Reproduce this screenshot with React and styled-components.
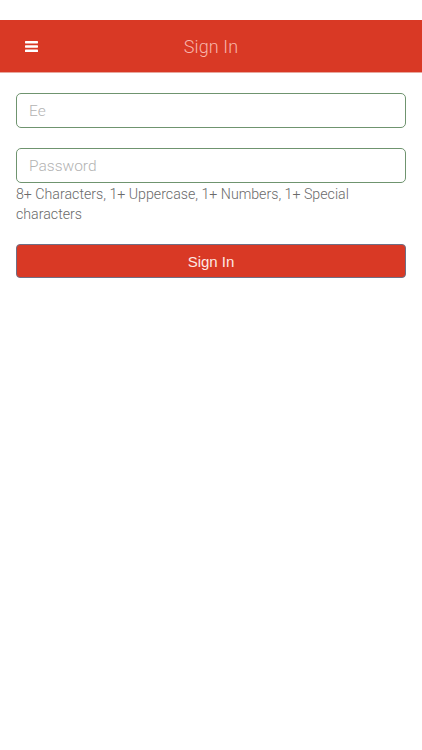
import React from "react";
import styled, { createGlobalStyle } from "styled-components";

const Global = createGlobalStyle`
  html, body { margin: 0; padding: 0; background: #ffffff; }
  body { font-family: "Liberation Sans", Arial, sans-serif; }
  * { box-sizing: border-box; }
`;

const Page = styled.div`
  width: 422px;
  min-height: 750px;
  background: #fff;
  padding-top: 20px;
`;

const Header = styled.header`
  height: 53px;
  background: #d93925;
  display: grid;
  grid-template-columns: 60px 1fr 60px;
  align-items: center;
  border-bottom: 1px solid #e8a79d;
`;

const MenuButton = styled.button`
  background: none;
  border: 0;
  padding: 0 0 0 25px;
  display: flex;
  align-items: center;
  height: 100%;
  cursor: pointer;
`;

const Title = styled.h1`
  margin: 0;
  text-align: center;
  font-family: "Roboto", "Liberation Sans", sans-serif;
  font-weight: 300;
  font-size: 18px;
  color: #f8b6ab;
  letter-spacing: 0.1px;
`;

const Form = styled.form`
  padding: 20px 16px 0;
  display: flex;
  flex-direction: column;
`;

const Input = styled.input`
  width: 100%;
  height: 35px;
  border: 1.5px solid #6f946f;
  border-radius: 5px;
  padding: 0 12px;
  font-family: "Roboto", "Liberation Sans", sans-serif;
  font-weight: 300;
  font-size: 15.5px;
  color: #333;
  outline: none;
  margin-top: ${(p) => p.$mt || 0}px;
  &::placeholder { color: #b3b3b3; }
`;

const Hint = styled.p`
  margin: 1px 0 0;
  font-size: 14.2px;
  line-height: 20px;
  color: #6a6a6a;
  font-family: "Roboto", "Liberation Sans", sans-serif;
  font-weight: 300;
`;

const SubmitButton = styled.button`
  margin-top: 20px;
  height: 34px;
  width: 100%;
  background: #d93925;
  border: 1.5px solid #6f6f85;
  border-radius: 4px;
  color: #fde8e4;
  font-family: "Liberation Sans", Arial, sans-serif;
  font-size: 15px;
  cursor: pointer;
`;

function Bars() {
  return (
    <svg width="13" height="11" viewBox="0 0 13 11">
      <rect x="0" y="0" width="13" height="2.4" rx="0.6" fill="#fff" />
      <rect x="0" y="4.3" width="13" height="2.4" rx="0.6" fill="#fff" />
      <rect x="0" y="8.6" width="13" height="2.4" rx="0.6" fill="#fff" />
    </svg>
  );
}

export default function App() {
  return (
    <Page>
      <Global />
      <Header>
        <MenuButton aria-label="menu">
          <Bars />
        </MenuButton>
        <Title>Sign In</Title>
        <div />
      </Header>
      <Form onSubmit={(e) => e.preventDefault()}>
        <Input placeholder="Ee" />
        <Input $mt={20} type="password" placeholder="Password" />
        <Hint>8+ Characters, 1+ Uppercase, 1+ Numbers, 1+ Special characters</Hint>
        <SubmitButton type="submit">Sign In</SubmitButton>
      </Form>
    </Page>
  );
}
